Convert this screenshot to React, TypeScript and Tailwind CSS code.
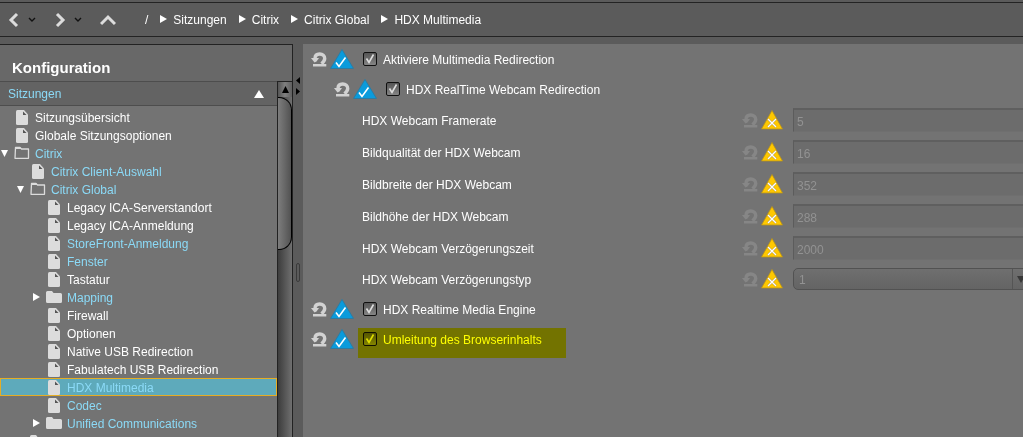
import { useState, type ReactNode } from "react";
import clsx from "clsx";

type NodeKind = "page" | "folder" | "folder-open";

interface TreeNode {
  label: string;
  level: 0 | 1 | 2;
  kind: NodeKind;
  changed?: boolean;
}

const tree: TreeNode[] = [
  { label: "Sitzungsübersicht", level: 0, kind: "page" },
  { label: "Globale Sitzungsoptionen", level: 0, kind: "page" },
  { label: "Citrix", level: 0, kind: "folder-open", changed: true },
  { label: "Citrix Client-Auswahl", level: 1, kind: "page", changed: true },
  { label: "Citrix Global", level: 1, kind: "folder-open", changed: true },
  { label: "Legacy ICA-Serverstandort", level: 2, kind: "page" },
  { label: "Legacy ICA-Anmeldung", level: 2, kind: "page" },
  { label: "StoreFront-Anmeldung", level: 2, kind: "page", changed: true },
  { label: "Fenster", level: 2, kind: "page", changed: true },
  { label: "Tastatur", level: 2, kind: "page" },
  { label: "Mapping", level: 2, kind: "folder", changed: true },
  { label: "Firewall", level: 2, kind: "page" },
  { label: "Optionen", level: 2, kind: "page" },
  { label: "Native USB Redirection", level: 2, kind: "page" },
  { label: "Fabulatech USB Redirection", level: 2, kind: "page" },
  { label: "HDX Multimedia", level: 2, kind: "page", changed: true },
  { label: "Codec", level: 2, kind: "page", changed: true },
  { label: "Unified Communications", level: 2, kind: "folder", changed: true },
];

const webcamFields = [
  { id: "framerate", label: "HDX Webcam Framerate", value: "5" },
  { id: "quality", label: "Bildqualität der HDX Webcam", value: "16" },
  { id: "width", label: "Bildbreite der HDX Webcam", value: "352" },
  { id: "height", label: "Bildhöhe der HDX Webcam", value: "288" },
  { id: "delay", label: "HDX Webcam Verzögerungszeit", value: "2000" },
];

const crumbs = ["Sitzungen", "Citrix", "Citrix Global", "HDX Multimedia"];

const indent = { 0: "pl-0", 1: "pl-4", 2: "pl-8" };

function Chevron({ d }: { d: string }) {
  return (
    <svg width="16" height="16" viewBox="0 0 16 16" fill="none" stroke="#dcdcdc" strokeWidth="3">
      <path d={d} />
    </svg>
  );
}

function SmallChevron() {
  return (
    <svg width="8" height="6" viewBox="0 0 8 6" fill="none" stroke="#111" strokeWidth="1.4">
      <path d="M1 1l3 3 3-3" />
    </svg>
  );
}

function NodeIcon({ kind }: { kind: NodeKind }) {
  if (kind === "page") {
    return (
      <svg width="16" height="16" viewBox="0 0 16 16">
        <path d="M3.500 1H10l4 4.500V14.500Q14 16 12.500 16H3.500Q2 16 2 14.500V2.500Q2 1 3.500 1z" fill="#dcdcdc" />
        <path d="M9 2.500V6h3.500z" fill="#555" />
      </svg>
    );
  }
  if (kind === "folder") {
    return (
      <svg width="16" height="16" viewBox="0 0 16 16">
        <path d="M1.500 2H6l1.500 2h7Q16 4 16 5.500v7Q16 14 14.500 14h-13Q0 14 0 12.500v-9Q0 2 1.500 2z" fill="#dcdcdc" />
      </svg>
    );
  }
  return (
    <svg width="16" height="16" viewBox="0 0 16 16">
      <path d="M1.500 2.500H6l1.500 1.500h7v9.300H1z" fill="none" stroke="#dcdcdc" strokeWidth="1.300" strokeLinejoin="round" />
      <path d="M1 2h5l1.500 2H1z" fill="#dcdcdc" />
    </svg>
  );
}

function ResetIcon() {
  return (
    <svg width="16" height="15" viewBox="0 0 16 15">
      <path d="M4 6.500C4 3.500 6 2 8.700 2c3 0 5 1.900 5 4.500 0 2.200-1.400 3.700-3.200 5.200" fill="none" stroke="currentColor" strokeWidth="3.400" />
      <path d="M0 6h8L5.500 9.500 3.500 10.500z" fill="currentColor" />
      <path d="M2 12h13.300v2.500H2z" fill="currentColor" />
    </svg>
  );
}

function ActiveMark() {
  return (
    <svg width="24" height="20" viewBox="0 0 24 20">
      <path d="M12 .5L23.500 19.500H.5z" fill="#0a9bdc" stroke="#2c7ca3" strokeWidth="1" strokeLinejoin="round" />
      <path d="M6 13.500l3 4L15.500 8.500" fill="none" stroke="#fff" strokeWidth="1.600" />
    </svg>
  );
}

function InactiveMark() {
  return (
    <svg width="22" height="20" viewBox="0 0 22 20">
      <path d="M11 .5L21.500 19H.5z" fill="#ffc800" stroke="#b8921a" strokeWidth=".8" strokeLinejoin="round" />
      <path d="M7 9l8 8M15 9l-8 8" stroke="#a88a30" strokeWidth="2.200" />
      <path d="M7 9l8 8M15 9l-8 8" stroke="#fff" strokeWidth="1.500" />
    </svg>
  );
}

function Toolbar() {
  return (
    <header className="shrink-0 bg-[#5b5b5b] pt-0.5 pb-[7px]">
      <div className="flex h-[35px] items-center border-y border-[#232323]">
        <button type="button" aria-label="Zurück" className="ml-1.5">
          <Chevron d="M11 2L5 8l6 6" />
        </button>
        <button type="button" aria-label="Verlauf zurück" className="ml-1.5">
          <SmallChevron />
        </button>
        <button type="button" aria-label="Vorwärts" className="ml-4">
          <Chevron d="M5 2l6 6-6 6" />
        </button>
        <button type="button" aria-label="Verlauf vorwärts" className="ml-1.5">
          <SmallChevron />
        </button>
        <button type="button" aria-label="Nach oben" className="ml-[18px]">
          <Chevron d="M1 12l7-7 7 7" />
        </button>
        <nav className="ml-[29px] flex items-center">
          <span>/</span>
          {crumbs.map((crumb) => (
            <span key={crumb} className="flex items-center">
              <svg width="7" height="8" viewBox="0 0 7 8" className="mr-1.5 mb-0.5 ml-3">
                <path d="M0 0l7 4-7 4z" fill="#fff" />
              </svg>
              <a href="#">{crumb}</a>
            </span>
          ))}
        </nav>
      </div>
    </header>
  );
}

function TreeRow({ node, selected, onSelect }: { node: TreeNode; selected: boolean; onSelect: () => void }) {
  return (
    <li>
      <button
        type="button"
        onClick={onSelect}
        className={clsx(
          "flex h-[18px] w-full items-center text-left",
          indent[node.level],
          node.changed && "text-[#8bdaf7]",
          selected && "bg-[#5eaabb] outline-1 -outline-offset-1 outline-[#e5ad24]"
        )}
      >
        <span className="w-3.5 pl-px">
          {node.kind === "folder-open" && (
            <svg width="7" height="7" viewBox="0 0 7 7">
              <path d="M0 0h7L3.500 7z" fill="#fff" />
            </svg>
          )}
          {node.kind === "folder" && (
            <svg width="7" height="8" viewBox="0 0 7 8">
              <path d="M0 0l7 4-7 4z" fill="#fff" />
            </svg>
          )}
        </span>
        <NodeIcon kind={node.kind} />
        <span className="pt-0.5 pl-[5px]">{node.label}</span>
      </button>
    </li>
  );
}

function Scrollbar() {
  return (
    <div className="flex w-[15px] shrink-0 flex-col border-l border-[#222] bg-linear-to-r from-[#3d3d3d] to-[#707070]">
      <button
        type="button"
        aria-label="Nach oben blättern"
        className="flex h-4 shrink-0 items-center justify-center border-t border-[#222] bg-linear-to-r from-[#555] via-[#808080] to-[#606060]"
      >
        <svg width="7" height="7" viewBox="0 0 7 7">
          <path d="M3.500 0L7 7H0z" fill="#000" />
        </svg>
      </button>
      <div className="h-[153px] shrink-0 rounded-r-[13px] border border-l-0 border-black bg-linear-to-r from-[#7d7d7d] via-[#686868] to-[#525252]" />
    </div>
  );
}

function Sidebar() {
  const [selected, setSelected] = useState("HDX Multimedia");

  return (
    <aside className="flex w-[293px] shrink-0 flex-col border-t border-r border-[#222] bg-[#737373]">
      <h1 className="h-9 shrink-0 bg-[#686868] pt-3 pl-3 text-[15px] leading-[22px] font-bold">Konfiguration</h1>
      <div className="flex min-h-0 flex-1">
        <div className="min-w-0 flex-1 overflow-hidden">
          <button
            type="button"
            className="flex h-[25px] w-full items-center justify-between border-y border-[#4d4d4d] bg-[#636363] pr-[13px] pl-2 text-[#8bdaf7]"
          >
            Sitzungen
            <svg width="10" height="8" viewBox="0 0 10 8">
              <path d="M5 0l5 8H0z" fill="#fff" />
            </svg>
          </button>
          <ul className="pt-0.5">
            {tree.map((node) => (
              <TreeRow
                key={node.label}
                node={node}
                selected={node.label === selected}
                onSelect={() => setSelected(node.label)}
              />
            ))}
            <li className="flex h-[18px] items-center pl-[30px]">
              <NodeIcon kind="folder" />
            </li>
          </ul>
        </div>
        <Scrollbar />
      </div>
    </aside>
  );
}

function Splitter() {
  return (
    <div className="flex w-2.5 shrink-0 flex-col bg-[#5b5b5b] pt-8 pl-[3px]">
      <svg width="5" height="20" viewBox="0 0 5 20" className="shrink-0">
        <path d="M4 1v7L0 4.500z" fill="#000" />
        <path d="M0 12v7l4-3.500z" fill="#000" />
      </svg>
      <div className="mt-[167px] h-[19px] w-1 rounded-full border border-[#3a3a3a]" />
    </div>
  );
}

interface CheckRowProps {
  id: string;
  label: string;
  nested?: boolean;
  highlight?: boolean;
}

function CheckRow({ id, label, nested, highlight }: CheckRowProps) {
  return (
    <div className={clsx("flex h-[30px] items-center", nested ? "pl-[31px]" : "pl-2")}>
      <button type="button" aria-label="Zurücksetzen" className="text-[#d2d2d2]">
        <ResetIcon />
      </button>
      <span className="ml-[3px]">
        <ActiveMark />
      </span>
      <div className="relative ml-1 flex h-[30px] items-center pr-6 pl-[5px]">
        <span className="grid">
          <input
            id={id}
            type="checkbox"
            defaultChecked
            className="peer col-start-1 row-start-1 size-3.5 appearance-none rounded-[2px] border border-[#101010] bg-linear-to-b from-[#555] to-[#858585]"
          />
          <svg
            viewBox="0 0 14 14"
            className="pointer-events-none col-start-1 row-start-1 size-3.5 opacity-0 peer-checked:opacity-100"
          >
            <path d="M3.500 6.500l2.500 4L10.500 2.500" fill="none" stroke="#dedede" strokeWidth="1.600" />
          </svg>
        </span>
        <label htmlFor={id} className="pt-0.5 pl-1.5">
          {label}
        </label>
        {highlight && <span className="pointer-events-none absolute inset-x-0 top-1 h-[30px] bg-[#ffff00] mix-blend-multiply" />}
      </div>
    </div>
  );
}

function FieldRow({ id, label, short, children }: { id: string; label: string; short?: boolean; children: ReactNode }) {
  return (
    <div className={clsx("flex items-center pl-[59px]", short ? "h-[30px]" : "h-8")}>
      <label htmlFor={id} className="w-[380px] shrink-0 pt-0.5">
        {label}
      </label>
      <button type="button" disabled aria-label="Zurücksetzen" className="text-[#868686]">
        <ResetIcon />
      </button>
      <span className="mr-2.5 ml-[3px]">
        <InactiveMark />
      </span>
      <div className="min-w-0 flex-1">{children}</div>
    </div>
  );
}

function Settings() {
  return (
    <main className="min-w-0 flex-1 overflow-hidden bg-[#737373]">
      <CheckRow id="redirection" label="Aktiviere Multimedia Redirection" />
      <CheckRow id="webcam" label="HDX RealTime Webcam Redirection" nested />
      {webcamFields.map((field) => (
        <FieldRow key={field.id} id={field.id} label={field.label}>
          <input
            id={field.id}
            type="text"
            disabled
            defaultValue={field.value}
            className="block h-6 w-full border-t-2 border-b border-l border-t-[#5f5f5f] border-b-[#6f6f6f] border-l-[#5c5c5c] bg-[#6c6c6c] pt-0.5 pl-[3px] text-[#929292]"
          />
        </FieldRow>
      ))}
      <FieldRow id="delay-type" label="HDX Webcam Verzögerungstyp" short>
        <div className="-mr-2.5 flex h-[22px] overflow-hidden rounded-[5px] border border-[#525252] bg-linear-to-b from-[#6f6f6f] to-[#646464]">
          <select id="delay-type" disabled className="min-w-0 flex-1 appearance-none pt-0.5 pl-[5px] text-[#929292] opacity-100">
            <option>1</option>
          </select>
          <span className="flex w-5 items-center border-l border-[#555] pl-1">
            <svg width="8" height="7" viewBox="0 0 8 7">
              <path d="M0 0h8L4 7z" fill="#383838" />
            </svg>
          </span>
        </div>
      </FieldRow>
      <CheckRow id="media-engine" label="HDX Realtime Media Engine" />
      <CheckRow id="browser" label="Umleitung des Browserinhalts" highlight />
    </main>
  );
}

export default function App() {
  return (
    <div className="flex h-screen flex-col overflow-hidden bg-[#5b5b5b] font-['Liberation_Sans',Arial,sans-serif] text-xs text-white">
      <Toolbar />
      <div className="flex min-h-0 flex-1">
        <Sidebar />
        <Splitter />
        <Settings />
      </div>
    </div>
  );
}
